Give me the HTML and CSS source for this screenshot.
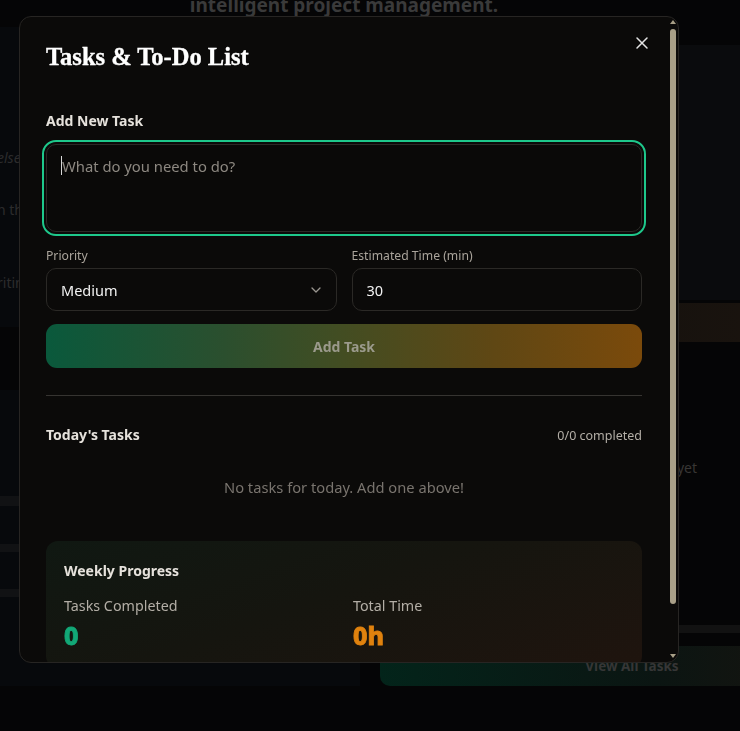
FILE: index.html
```html
<!DOCTYPE html>
<html lang="en">
<head>
<meta charset="utf-8">
<title>Tasks &amp; To-Do List</title>
<link rel="stylesheet" href="styles.css">
</head>
<body>
<div class="page">
  <h2 class="hero">intelligent project management.</h2>
  <div class="bg-grid">
    <div class="bg-left">
      <p class="bg-line bg-line-1"><em>else to remember</em></p>
      <p class="bg-line bg-line-2">n the morning</p>
      <p class="bg-line bg-line-3">ritinerary notes</p>
      <div class="bg-band-dark"></div>
      <div class="bg-rule bg-rule-1"></div>
      <div class="bg-rule bg-rule-2"></div>
      <div class="bg-rule bg-rule-3"></div>
    </div>
    <div class="bg-right">
      <div class="bg-panel"></div>
      <div class="bg-bar"></div>
      <p class="bg-yet">No upcoming deadlines yet</p>
      <div class="bg-strip"></div>
      <div class="bg-btn">View All Tasks</div>
    </div>
  </div>
</div>

<div class="modal" role="dialog" aria-label="Tasks &amp; To-Do List">
  <button class="close" aria-label="Close">
    <svg width="16" height="16" viewBox="0 0 16 16"><path d="M3 3 L13 13 M13 3 L3 13" stroke="#e4e4e4" stroke-width="1.5" stroke-linecap="round"/></svg>
  </button>
  <div class="scrollbar" aria-hidden="true">
    <svg width="6" height="4" viewBox="0 0 6 4"><path d="M0 4 L3 0 L6 4z" fill="#a89f87"/></svg>
    <div class="thumb"></div>
    <svg class="arrow-down" width="6" height="4" viewBox="0 0 6 4"><path d="M0 0 L6 0 L3 4z" fill="#a89f87"/></svg>
  </div>

  <h1 class="modal-title">Tasks &amp; To-Do List</h1>

  <section class="add">
    <div class="section-label">Add New Task</div>
    <div class="textarea"><span class="caret"></span><span class="placeholder">What do you need to do?</span></div>
    <div class="field-row">
      <div class="field">
        <div class="field-label">Priority</div>
        <div class="control select">
          <span>Medium</span>
          <svg width="10" height="6" viewBox="0 0 10 6"><path d="M1 1 L5 5 L9 1" fill="none" stroke="#9a9690" stroke-width="1.3" stroke-linecap="round" stroke-linejoin="round"/></svg>
        </div>
      </div>
      <div class="field">
        <div class="field-label">Estimated Time (min)</div>
        <div class="control">30</div>
      </div>
    </div>
    <button class="add-btn">Add Task</button>
  </section>

  <hr class="divider">

  <section class="today">
    <div class="today-head">
      <h3 class="section-title">Today's Tasks</h3>
      <span class="count">0/0 completed</span>
    </div>
    <p class="empty">No tasks for today. Add one above!</p>
  </section>

  <section class="weekly">
    <h3 class="section-title">Weekly Progress</h3>
    <div class="stats">
      <div class="stat">
        <div class="stat-label">Tasks Completed</div>
        <div class="stat-value green">0</div>
      </div>
      <div class="stat">
        <div class="stat-label">Total Time</div>
        <div class="stat-value orange">0h</div>
      </div>
    </div>
  </section>
</div>
</body>
</html>
```

FILE: styles.css
```css
* { box-sizing: border-box; margin: 0; padding: 0; }

html, body { height: 100%; }

body {
  background: #050506;
  font-family: "Noto Sans", "Open Sans", sans-serif;
  color: #eeeae4;
  overflow: hidden;
}

/* ---------- background page (dimmed, behind modal) ---------- */
.page {
  height: 100vh;
  overflow: hidden;
}

.hero {
  margin-top: -7px;
  padding-right: 52px;
  text-align: center;
  font-size: 19px;
  line-height: 24px;
  font-weight: 700;
  color: #3a3a3a;
}

.bg-grid {
  display: grid;
  grid-template-columns: 360px 504px;
  column-gap: 20px;
  margin-top: 10px;
}

.bg-left { background: #07090c; }

.bg-line {
  margin-left: -3px;
  font-size: 14px;
  line-height: 20px;
  color: #2c2c2d;
  white-space: nowrap;
}
.bg-line-1 { margin-top: 121px; }
.bg-line-2 { margin-top: 32px; }
.bg-line-3 { margin-top: 53px; }

.bg-band-dark { margin-top: 34px; height: 63px; background: #050506; }
.bg-rule { background: #111214; }
.bg-rule-1 { margin-top: 106px; height: 10px; }
.bg-rule-2 { margin-top: 38px; height: 8px; }
.bg-rule-3 { margin-top: 37px; height: 8px; }

.bg-right { display: flex; flex-direction: column; }

.bg-panel {
  margin-top: 18px;
  height: 255px;
  background: #0a0b0d;
  border-radius: 10px;
}
.bg-bar {
  margin-top: 3px;
  height: 39px;
  border-radius: 8px;
  background: linear-gradient(90deg, #0f0e0c, #1d150f);
}
.bg-yet {
  margin-top: 116px;
  padding-right: 187px;
  text-align: right;
  font-size: 14px;
  line-height: 20px;
  color: #383634;
  white-space: nowrap;
}
.bg-strip {
  margin-top: 147px;
  height: 8px;
  background: #121212;
}
.bg-btn {
  margin-top: 13px;
  height: 40px;
  border-radius: 10px;
  background: linear-gradient(90deg, #03241a 0%, #0b1512 55%, #1c130e 100%);
  text-align: center;
  font-size: 13.5px;
  line-height: 40px;
  font-weight: 700;
  color: #363636;
}

/* ---------- modal ---------- */
.modal {
  position: fixed;
  left: 19px;
  top: 16px;
  width: 660px;
  height: 647px;
  padding: 24px 36px 0 26px;
  background: #0b0a09;
  border: 1px solid #272523;
  border-radius: 12px;
  overflow: hidden;
}

.scrollbar {
  position: absolute;
  top: 0;
  right: 0;
  bottom: 0;
  width: 10px;
  display: flex;
  flex-direction: column;
  align-items: center;
  padding: 3px 0 4px;
}
.thumb {
  margin-top: 5px;
  width: 6px;
  height: 575px;
  border-radius: 3px;
  background: #a89f87;
}
.arrow-down { margin-top: auto; }

.close {
  position: absolute;
  top: 18px;
  right: 28px;
  width: 16px;
  height: 16px;
  border: 0;
  background: none;
  display: flex;
}

.modal-title {
  font-family: "Liberation Serif", "Times New Roman", serif;
  font-size: 24.5px;
  line-height: 32px;
  font-weight: 700;
  color: #ffffff;
  -webkit-text-stroke: 0.35px #ffffff;
}

.add { margin-top: 38px; }

.section-label,
.section-title {
  font-size: 14px;
  line-height: 20px;
  font-weight: 700;
  color: #e6e2dc;
}

.textarea {
  margin-top: 13px;
  height: 88px;
  padding: 11px 14px;
  background: #0a0908;
  border: 1px solid #2b2926;
  border-radius: 10px;
  outline: 2px solid #1ec88b;
  outline-offset: 2px;
  font-size: 14.8px;
  line-height: 20px;
  display: flex;
  align-items: flex-start;
}
.caret {
  display: inline-block;
  width: 1px;
  height: 19px;
  background: #d8d8d8;
}
.placeholder { color: #8d8881; }

.field-row {
  margin-top: 15px;
  display: grid;
  grid-template-columns: 1fr 1fr;
  column-gap: 15px;
}
.field-label {
  font-size: 12.2px;
  line-height: 17px;
  color: #aaa49b;
}
.control {
  margin-top: 4px;
  height: 43px;
  padding: 0 14px;
  display: flex;
  align-items: center;
  border: 1px solid #2b2926;
  border-radius: 10px;
  background: #0b0a09;
  font-size: 14.5px;
  color: #f2f2f2;
}
.select { justify-content: space-between; padding-right: 15px; }

.add-btn {
  display: block;
  width: 100%;
  margin-top: 13px;
  height: 44px;
  border: 0;
  border-radius: 11px;
  background: linear-gradient(90deg, #0a593c 0%, #2b4f2e 30%, #434d22 50%, #5f4714 75%, #7b4a0b 100%);
  font-family: inherit;
  font-size: 14px;
  font-weight: 700;
  color: #9b9a8c;
}

.divider {
  margin-top: 27px;
  border: 0;
  height: 1px;
  background: #363431;
}

.today { margin-top: 28px; }
.today-head {
  display: flex;
  justify-content: space-between;
  align-items: center;
  height: 22px;
}
.count {
  font-size: 12.5px;
  color: #b3aea6;
}
.empty {
  margin-top: 30px;
  text-align: center;
  font-size: 14.7px;
  line-height: 22px;
  color: #79746e;
}

.weekly {
  margin-top: 43px;
  padding: 19px 18px 18px;
  border-radius: 12px;
  background: linear-gradient(160deg, #101812 0%, #15150f 45%, #1f140e 100%);
}
.weekly .section-title { line-height: 22px; }

.stats {
  margin-top: 14px;
  display: grid;
  grid-template-columns: 1fr 1fr;
  column-gap: 18px;
}
.stat-label {
  font-size: 14.3px;
  line-height: 20px;
  color: #b3aea6;
}
.stat-value {
  margin-top: 4px;
  font-size: 25px;
  line-height: 30px;
  font-weight: 800;
  -webkit-text-stroke: 0.8px currentColor;
}
.green { color: #12a877; }
.orange { color: #e0820e; }
```
